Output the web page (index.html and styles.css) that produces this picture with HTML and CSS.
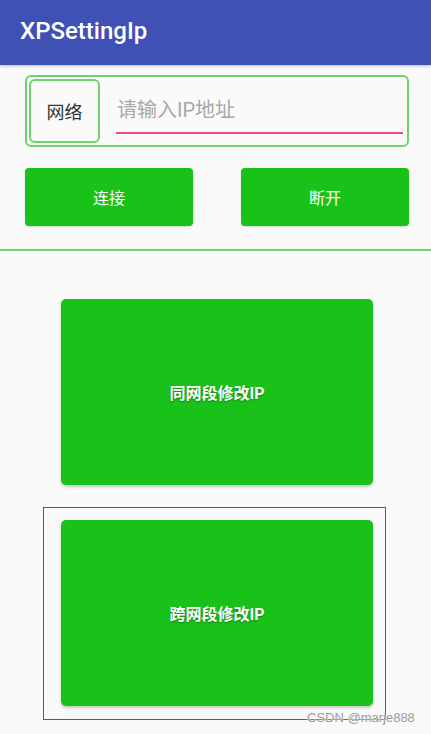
FILE: index.html
```html
<!DOCTYPE html>
<html>
<head>
<meta charset="utf-8">
<link rel="stylesheet" href="styles.css">
</head>
<body>
<div class="app">
  <header class="bar"><span class="title">XPSettingIp</span></header>
  <main class="content">
    <div class="ipbox">
      <div class="label">网络</div>
      <div class="field"><span class="ph">请输入IP地址</span></div>
    </div>
    <div class="btnrow">
      <div class="btn">连接</div>
      <div class="btn">断开</div>
    </div>
  </main>
  <div class="divider"></div>
  <section class="big">
    <div class="bigwrap"><div class="bigbtn">同网段修改IP</div></div>
    <div class="bigwrap marked"><div class="bigbtn">跨网段修改IP</div></div>
  </section>
  <div class="wm">CSDN @marje888</div>
</div>
</body>
</html>
```
FILE: styles.css
```css
html, body { margin: 0; padding: 0; }
body {
  width: 431px; height: 734px; overflow: hidden;
  background: #fafafa;
  font-family: Roboto, "Noto Sans CJK SC", sans-serif;
}
.app { position: relative; width: 431px; height: 734px; }
.bar {
  height: 65px; background: #3f51b5;
  display: flex; align-items: center; padding-left: 20px;
  box-shadow: 0 1px 3px rgba(0,0,0,0.25);
}
.title { color: #fff; font-size: 24px; font-weight: 500; margin-top: -3px; }
.content { padding: 10px 22px 0 25px; }
.ipbox {
  box-sizing: border-box;
  height: 72px; border: 2px solid #6fd26f; border-radius: 6px;
  display: flex; align-items: stretch; padding: 2px;
}
.label {
  width: 67px; border: 2px solid #6fd26f; border-radius: 6px;
  display: flex; align-items: center; justify-content: center;
  font-size: 18px; color: #333;
}
.field { flex: 1; margin-left: 16px; margin-right: 2px; padding-left: 1px; position: relative; display: flex; align-items: center; border-bottom: 2px solid #ee4a7e; margin-top: 8px; margin-bottom: 9px; }
.ph { font-size: 20px; color: #a8a8a8; margin-top: -2px; }
.btnrow { display: flex; justify-content: space-between; margin-top: 21px; }
.btn {
  width: 168px; height: 58px; background: #19c219; border-radius: 4px;
  color: #fff; font-size: 16px; display: flex; align-items: center; justify-content: center;
  box-shadow: 0 1px 2px rgba(0,0,0,0.15);
}
.divider { height: 2px; background: #6fd26f; margin-top: 23px; }
.big { display: flex; flex-direction: column; padding-top: 48px; }
.bigwrap { width: 312px; margin-left: 61px; }
.bigbtn {
  height: 186px; background: #19c219; border-radius: 5px;
  color: #fff; font-size: 16px; font-weight: bold;
  display: flex; align-items: center; justify-content: center;
  box-shadow: 0 2px 3px rgba(0,0,0,0.2);
  text-shadow: 0 1px 2px rgba(0,0,0,0.35);
}
.marked {
  margin-top: 22px; margin-left: 43px; width: 343px; height: 213px; box-sizing: border-box;
  border: 1px solid #d42a2a; padding: 12px 0 0 17px;
}
.marked .bigbtn { width: 312px; height: 186px; }
.wm {
  position: absolute; left: 307px; top: 710px;
  font-family: "Liberation Sans", sans-serif; font-size: 13px; color: #9a9a9a;
  text-shadow: 0 0 2px #fff, 0 0 2px #fff;
}
```
